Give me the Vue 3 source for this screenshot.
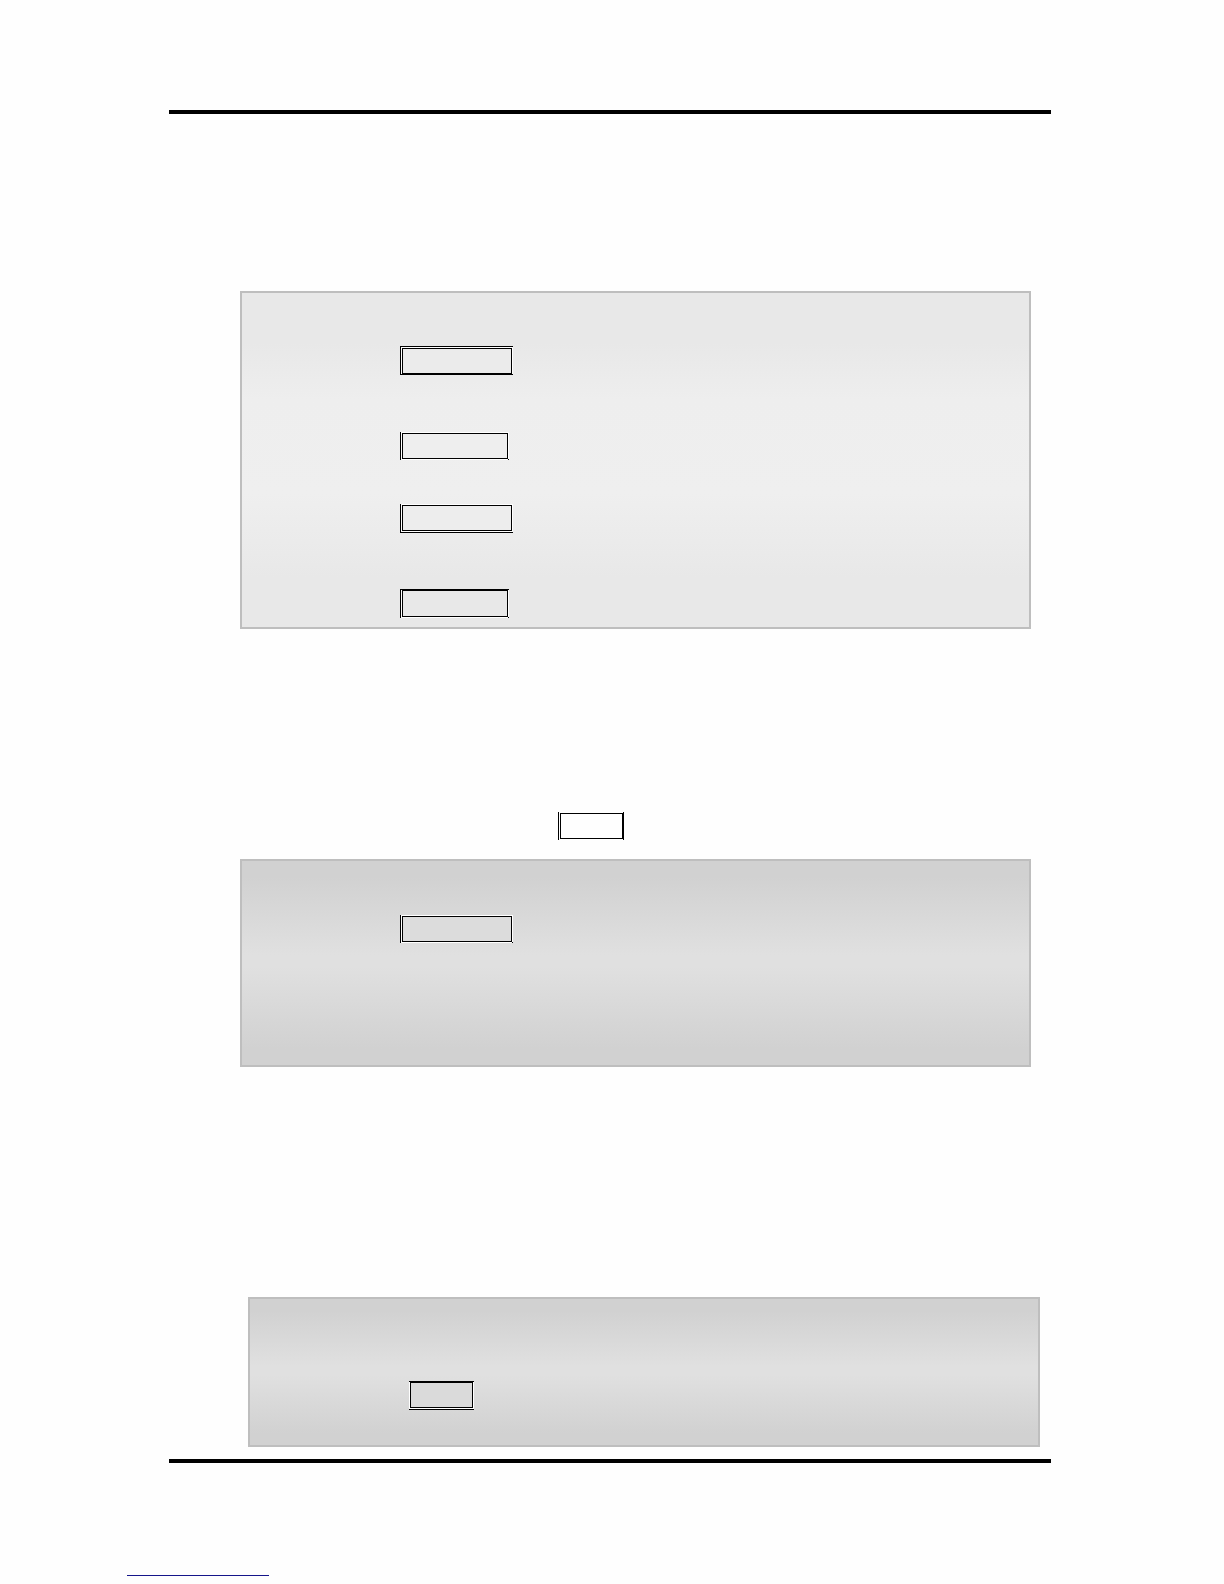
<template>
  <div class="page">
    <hr class="page-rule" />

    <section class="panel light steps">
      <span v-for="(frame, i) in stepFrames" :key="i" class="frame" :class="frame">
        <span class="frame-inner"></span>
      </span>
    </section>

    <div class="inline-row">
      <span class="frame left right short">
        <span class="frame-inner"></span>
      </span>
    </div>

    <section class="panel single">
      <span class="frame left dot wide">
        <span class="frame-inner"></span>
      </span>
    </section>

    <section class="panel last">
      <span class="frame top-thick bottom short">
        <span class="frame-inner"></span>
      </span>
    </section>

    <hr class="page-rule footer-rule" />
    <div class="footer-line"></div>
  </div>
</template>

<script setup>
// which outer edges are inked around each frame
const stepFrames = [
  ['left', 'top', 'bottom-thick', 'wide'],
  ['left', 'dot', 'medium'],
  ['left', 'bottom', 'wide'],
  ['left', 'top-thick', 'dot', 'medium', 'tall']
];
</script>

<style>
body {
  margin: 0;
  background: #fefefe;
}
</style>

<style scoped>
.page {
  display: flex;
  flex-direction: column;
  padding: 110px 173px 8px 169px;
  font-family: "Liberation Sans", Arial, sans-serif;
}

.page-rule {
  width: 100%;
  height: 4px;
  margin: 0;
  border: 0;
  background: #000;
}

.panel {
  box-sizing: border-box;
  display: grid;
  align-items: start;
  justify-items: start;
  margin: 0 20px 0 71px;
  border: 2px solid #bebebe;
  background: linear-gradient(#d1d1d1 8%, #e0e0e0 46%, #e0e0e0 52%, #d1d1d1 92%);
}

.panel.light {
  background: linear-gradient(#e8e8e8 15%, #eeeeee 32%, #efefef 60%, #e8e8e8 85%);
}

.steps {
  grid-template-rows: 86px 72px 85px 38px;
  margin-top: 177px;
  padding: 53px 0 0 158px;
}

.inline-row {
  display: flex;
  margin-top: 183px;
  padding-left: 389px;
}

.single {
  margin-top: 19px;
  padding: 54px 0 122px 158px;
}

.last {
  margin: 230px 11px 0 79px;
  padding: 82px 0 35px 159px;
}

.footer-rule {
  margin-top: 12px;
}

.footer-line {
  width: 142px;
  height: 1px;
  margin-top: 112px;
  margin-left: -42px;
  background: #15158a;
}

/* Double outlined frames: white gap between the two outlines */
.frame {
  display: flex;
  padding: 1px;
  background-color: #fff;
}

.frame-inner {
  box-sizing: border-box;
  width: 110px;
  height: 26px;
  border: 1px solid #000;
  background: #dcdcdc;
}

.inline-row .frame-inner {
  background: #fefefe;
}

.light .frame-inner {
  background: #ebebeb;
}

.light .frame:nth-child(2) .frame-inner {
  background: #eeeeee;
}

.light .frame:nth-child(3) .frame-inner {
  background: #ededed;
}

.light .frame:nth-child(4) .frame-inner {
  background: #e8e8e8;
}

.last .frame-inner {
  background: #dadada;
}

.medium .frame-inner {
  width: 106px;
}

.short .frame-inner {
  width: 63px;
}

.tall .frame-inner {
  height: 27px;
}

.frame.left {
  border-left: 1px solid #000;
}

.frame.right {
  padding-right: 0;
  border-right: 1px solid #000;
}

.frame.top {
  border-top: 1px solid #000;
}

.frame.top-thick {
  padding-top: 0;
  border-top: 1px solid #000;
}

.frame.bottom {
  border-bottom: 1px solid #000;
}

.frame.bottom-thick {
  padding-bottom: 0;
  border-bottom: 1px solid #000;
}

.frame.dot {
  background: linear-gradient(#000, #000) right bottom / 1px 1px no-repeat #fff;
}
</style>
